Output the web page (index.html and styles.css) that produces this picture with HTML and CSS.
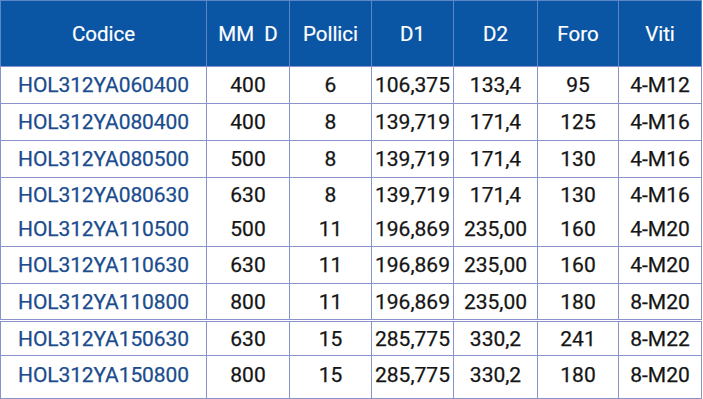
FILE: index.html
```html
<!DOCTYPE html>
<html lang="it">
<head>
<meta charset="utf-8">
<title>Tabella HOL312YA</title>
<link rel="stylesheet" href="styles.css">
</head>
<body>
<table class="spec">
  <colgroup>
    <col class="c-code"><col class="c-mm"><col class="c-pol"><col class="c-d1"><col class="c-d2"><col class="c-foro"><col class="c-viti">
  </colgroup>
  <thead>
    <tr class="head">
      <th>Codice</th><th>MM&nbsp; D</th><th>Pollici</th><th>D1</th><th>D2</th><th>Foro</th><th>Viti</th>
    </tr>
  </thead>
  <tbody>
    <tr class="r37"><td class="code">HOL312YA060400</td><td>400</td><td>6</td><td>106,375</td><td>133,4</td><td>95</td><td>4-M12</td></tr>
    <tr class="r37"><td class="code">HOL312YA080400</td><td>400</td><td>8</td><td>139,719</td><td>171,4</td><td>125</td><td>4-M16</td></tr>
    <tr class="r37"><td class="code">HOL312YA080500</td><td>500</td><td>8</td><td>139,719</td><td>171,4</td><td>130</td><td>4-M16</td></tr>
    <tr class="r35 nobottom"><td class="code">HOL312YA080630</td><td>630</td><td>8</td><td>139,719</td><td>171,4</td><td>130</td><td>4-M16</td></tr>
    <tr class="r34 notop"><td class="code">HOL312YA110500</td><td>500</td><td>11</td><td>196,869</td><td>235,00</td><td>160</td><td>4-M20</td></tr>
    <tr class="r37"><td class="code">HOL312YA110630</td><td>630</td><td>11</td><td>196,869</td><td>235,00</td><td>160</td><td>4-M20</td></tr>
    <tr class="r37"><td class="code">HOL312YA110800</td><td>800</td><td>11</td><td>196,869</td><td>235,00</td><td>180</td><td>8-M20</td></tr>
    <tr class="r35 dbltop"><td class="code">HOL312YA150630</td><td>630</td><td>15</td><td>285,775</td><td>330,2</td><td>241</td><td>8-M22</td></tr>
    <tr class="r43"><td class="code last">HOL312YA150800</td><td class="last">800</td><td class="last">15</td><td class="last">285,775</td><td class="last">330,2</td><td class="last">180</td><td class="last">8-M20</td></tr>
  </tbody>
</table>
</body>
</html>
```
FILE: styles.css
```css
html, body {
  margin: 0;
  padding: 0;
  background: #ffffff;
}

body {
  font-family: Roboto, "Noto Sans", sans-serif;
  overflow: hidden;
}

.spec {
  border-collapse: collapse;
  table-layout: fixed;
  width: 701px;
}

.c-code { width: 206px; }
.c-mm { width: 83px; }
.c-pol { width: 82px; }
.c-d1 { width: 82px; }
.c-d2 { width: 84px; }
.c-foro { width: 81px; }
.c-viti { width: 83px; }

.head {
  height: 66px;
}

.head th {
  background: #0a55a4;
  color: #ffffff;
  font-weight: 400;
  font-size: 20.5px;
  text-align: center;
  border: 1px solid #5b87c6;
  border-bottom-color: #8a92cc;
  padding: 0;
  -webkit-text-stroke: 0.2px #ffffff;
}

td {
  border: 1px solid #8a92cc;
  font-size: 21px;
  color: #151515;
  text-align: center;
  padding: 0;
  white-space: nowrap;
  -webkit-text-stroke: 0.25px #151515;
}

td.code {
  text-align: left;
  padding-left: 17px;
  color: #1a4c8e;
  letter-spacing: -0.1px;
  -webkit-text-stroke: 0.25px #1a4c8e;
}

td.last {
  vertical-align: top;
  padding-top: 7px;
}

.r34 { height: 34px; }
.r35 { height: 35px; }
.r37 { height: 37px; }
.r43 { height: 43px; }

.nobottom td { border-bottom-style: hidden; }
.notop td { border-top-style: hidden; }
.dbltop td { border-top: 3px double #8a92cc; }
```
